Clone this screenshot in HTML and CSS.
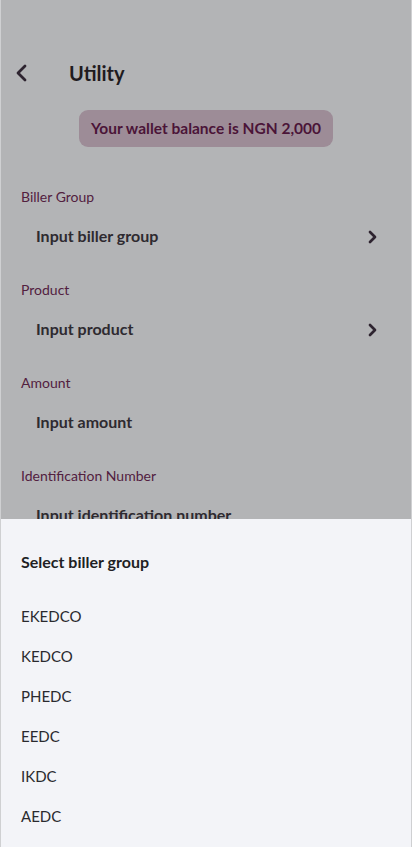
FILE: index.html
```html
<!DOCTYPE html>
<html>
<head>
<meta charset="utf-8">
<link rel="stylesheet" href="styles.css">
</head>
<body>
<div class="screen">
  <div class="page">
    <header class="header">
      <svg class="back" width="14" height="18" viewBox="0 0 14 18"><path d="M11 2 L4 9 L11 16" fill="none" stroke="#2e2430" stroke-width="2.8" stroke-linecap="round" stroke-linejoin="round"/></svg>
      <h1 class="title">Utility</h1>
    </header>
    <div class="badge-wrap"><div class="badge">Your wallet balance is NGN 2,000</div></div>
    <div class="field">
      <div class="label">Biller Group</div>
      <div class="input"><span>Input biller group</span><svg class="chev" width="11" height="14" viewBox="0 0 11 14"><path d="M3 2 L8 7 L3 12" fill="none" stroke="#2e2430" stroke-width="2.7" stroke-linecap="round" stroke-linejoin="round"/></svg></div>
    </div>
    <div class="field">
      <div class="label">Product</div>
      <div class="input"><span>Input product</span><svg class="chev" width="11" height="14" viewBox="0 0 11 14"><path d="M3 2 L8 7 L3 12" fill="none" stroke="#2e2430" stroke-width="2.7" stroke-linecap="round" stroke-linejoin="round"/></svg></div>
    </div>
    <div class="field">
      <div class="label">Amount</div>
      <div class="input"><span>Input amount</span></div>
    </div>
    <div class="field">
      <div class="label">Identification Number</div>
      <div class="input"><span>Input identification number</span></div>
    </div>
  </div>
  <div class="sheet">
    <div class="sheet-title">Select biller group</div>
    <ul class="options">
      <li>EKEDCO</li>
      <li>KEDCO</li>
      <li>PHEDC</li>
      <li>EEDC</li>
      <li>IKDC</li>
      <li>AEDC</li>
    </ul>
  </div>
</div>
</body>
</html>
```
FILE: styles.css
```css
* { box-sizing: border-box; }
html, body { margin: 0; padding: 0; }
body {
  width: 412px;
  height: 847px;
  overflow: hidden;
  font-family: Lato, "Noto Sans", sans-serif;
  background: #b3b4b6;
}
.screen {
  position: relative;
  width: 412px;
  height: 847px;
  overflow: hidden;
  background: #b3b4b6;
  border-left: 1px solid #cfd0d2;
  border-right: 1px solid #cfd0d2;
}
.page {
  padding: 49px 20px 0 20px;
}
.header {
  display: flex;
  align-items: center;
  height: 48px;
}
.back {
  margin-left: -7px;
  width: 14px;
  height: 18px;
}
.title {
  margin: 0 0 0 41px;
  font-size: 20px;
  font-weight: 700;
  color: #1f1b20;
  line-height: 24px;
}
.badge-wrap {
  display: flex;
  justify-content: center;
  margin-top: 13px;
}
.badge {
  background: #9d8c97;
  color: #4b1438;
  font-size: 15.5px;
  font-weight: 700;
  height: 37px;
  line-height: 37px;
  padding: 0 12px;
  border-radius: 9px;
}
.field {
  margin-top: 40px;
}
.field + .field {
  margin-top: 25px;
}
.label {
  font-size: 14px;
  line-height: 20px;
  color: #52203f;
}
.input {
  display: flex;
  align-items: center;
  justify-content: space-between;
  height: 40px;
  margin-top: 8px;
  padding: 0 13px 0 15px;
  font-size: 16px;
  font-weight: 700;
  color: #2e2a30;
}
.chev { margin-top: 3px; }
.sheet {
  position: absolute;
  left: 0;
  right: 0;
  top: 519px;
  bottom: 0;
  background: #f3f4f8;
  padding: 33px 20px 0 20px;
}
.sheet-title {
  font-size: 16px;
  font-weight: 700;
  line-height: 20px;
  color: #1f1f24;
}
.options {
  list-style: none;
  margin: 24px 0 0 0;
  padding: 0;
}
.options li {
  height: 40px;
  line-height: 40px;
  font-size: 15px;
  color: #2a2a2e;
}
```
